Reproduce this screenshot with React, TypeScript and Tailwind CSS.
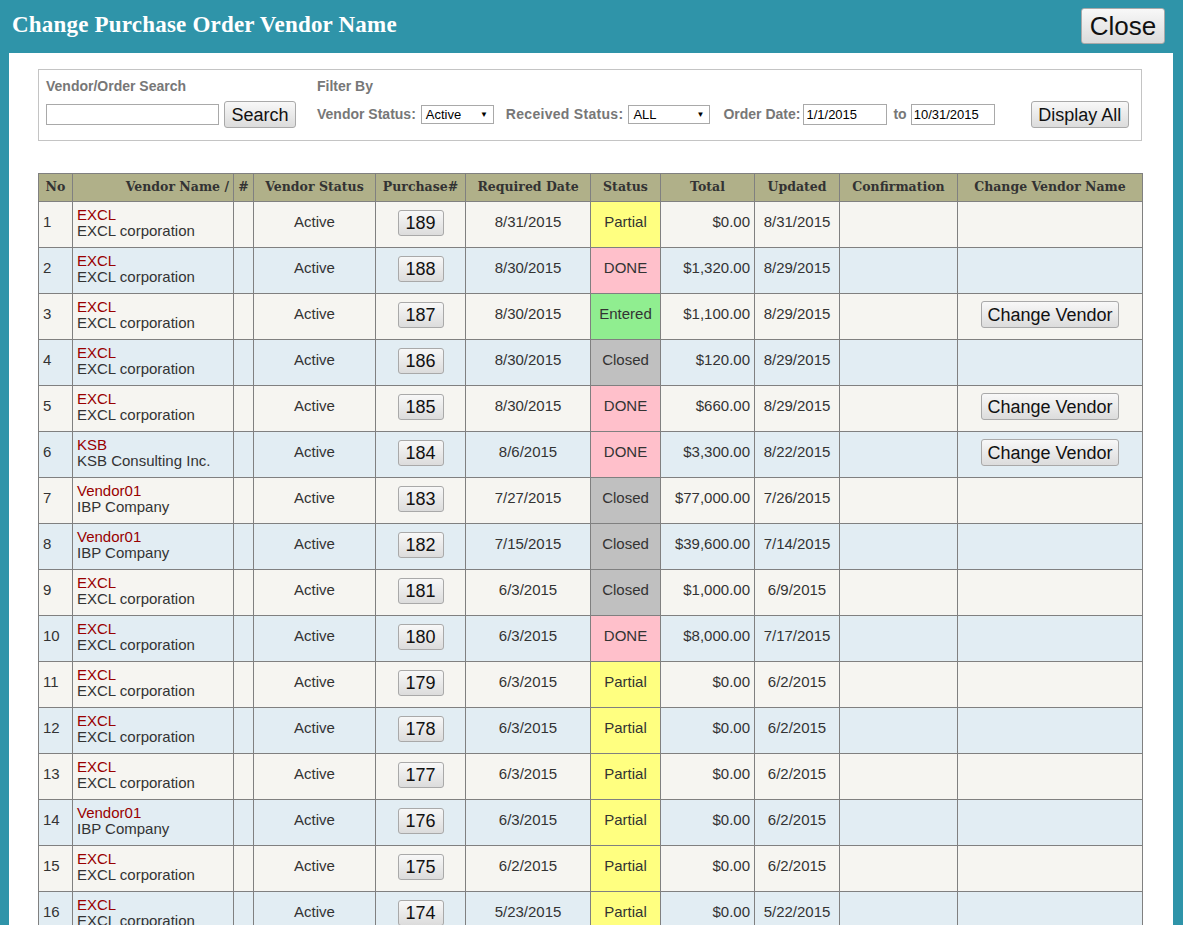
import React from "react";

type Status = "Partial" | "DONE" | "Entered" | "Closed";

type Row = {
  code: string;
  name: string;
  po: number;
  required: string;
  status: Status;
  total: string;
  updated: string;
  change?: boolean;
};

const EX = { code: "EXCL", name: "EXCL corporation" };
const IBP = { code: "Vendor01", name: "IBP Company" };
const KSB = { code: "KSB", name: "KSB Consulting Inc." };

const rows: Row[] = [
  { ...EX, po: 189, required: "8/31/2015", status: "Partial", total: "$0.00", updated: "8/31/2015" },
  { ...EX, po: 188, required: "8/30/2015", status: "DONE", total: "$1,320.00", updated: "8/29/2015" },
  { ...EX, po: 187, required: "8/30/2015", status: "Entered", total: "$1,100.00", updated: "8/29/2015", change: true },
  { ...EX, po: 186, required: "8/30/2015", status: "Closed", total: "$120.00", updated: "8/29/2015" },
  { ...EX, po: 185, required: "8/30/2015", status: "DONE", total: "$660.00", updated: "8/29/2015", change: true },
  { ...KSB, po: 184, required: "8/6/2015", status: "DONE", total: "$3,300.00", updated: "8/22/2015", change: true },
  { ...IBP, po: 183, required: "7/27/2015", status: "Closed", total: "$77,000.00", updated: "7/26/2015" },
  { ...IBP, po: 182, required: "7/15/2015", status: "Closed", total: "$39,600.00", updated: "7/14/2015" },
  { ...EX, po: 181, required: "6/3/2015", status: "Closed", total: "$1,000.00", updated: "6/9/2015" },
  { ...EX, po: 180, required: "6/3/2015", status: "DONE", total: "$8,000.00", updated: "7/17/2015" },
  { ...EX, po: 179, required: "6/3/2015", status: "Partial", total: "$0.00", updated: "6/2/2015" },
  { ...EX, po: 178, required: "6/3/2015", status: "Partial", total: "$0.00", updated: "6/2/2015" },
  { ...EX, po: 177, required: "6/3/2015", status: "Partial", total: "$0.00", updated: "6/2/2015" },
  { ...IBP, po: 176, required: "6/3/2015", status: "Partial", total: "$0.00", updated: "6/2/2015" },
  { ...EX, po: 175, required: "6/2/2015", status: "Partial", total: "$0.00", updated: "6/2/2015" },
  { ...EX, po: 174, required: "5/23/2015", status: "Partial", total: "$0.00", updated: "5/22/2015" },
  { ...EX, po: 173, required: "5/20/2015", status: "Closed", total: "$450.00", updated: "5/19/2015" },
];

const STATUS_BG: Record<Status, string> = {
  Partial: "bg-[#ffff80]",
  DONE: "bg-[#ffc0cb]",
  Entered: "bg-[#90ee90]",
  Closed: "bg-[#c0c0c0]",
};

const btn =
  "border border-[#a9a9a9] rounded-[3px] bg-linear-to-b from-[#f8f8f8] to-[#dcdcdc] text-[#111] leading-none";

function FakeSelect({ value, width }: { value: string; width: string }) {
  return (
    <div
      className={`${width} h-[19px] border border-[#a9a9a9] bg-white flex items-center justify-between pl-[4px] pr-[5px] text-[13px] text-black font-normal`}
    >
      <span>{value}</span>
      <span className="text-[8px]">▼</span>
    </div>
  );
}

function Filters() {
  return (
    <div className="border border-[#c4c4c4] h-[72px] pl-[7px] pt-[8px] flex font-['Liberation_Sans',Arial,sans-serif] text-[14px] font-bold text-[#777]">
      <div className="flex flex-col w-[271px]">
        <div className="h-[16px] leading-[16px]">Vendor/Order Search</div>
        <div className="flex items-center mt-[7px]">
          <div className="w-[173px] h-[21px] border border-[#a9a9a9] bg-white" />
          <button className={`${btn} ml-[5px] w-[72px] h-[27px] text-[18px] font-normal`}>Search</button>
        </div>
      </div>
      <div className="flex flex-col">
        <div className="h-[16px] leading-[16px]">Filter By</div>
        <div className="flex items-center mt-[7px] h-[27px]">
          <span>Vendor Status:</span>
          <div className="ml-[5px]">
            <FakeSelect value="Active" width="w-[73px]" />
          </div>
          <span className="ml-[12px] tracking-[0.3px]">Received Status:</span>
          <div className="ml-[5px]">
            <FakeSelect value="ALL" width="w-[82px]" />
          </div>
          <span className="ml-[13px]">Order Date:</span>
          <div className="ml-[3px] w-[84px] h-[21px] border border-[#a9a9a9] bg-white pl-[2px] text-[13px] font-normal text-black leading-[19px]">
            1/1/2015
          </div>
          <span className="ml-[6px]">to</span>
          <div className="ml-[4px] w-[84px] h-[21px] border border-[#a9a9a9] bg-white pl-[2px] text-[13px] font-normal text-black leading-[19px]">
            10/31/2015
          </div>
          <button className={`${btn} ml-[36px] w-[98px] h-[27px] text-[18px] font-normal`}>Display All</button>
        </div>
      </div>
    </div>
  );
}

const th =
  "border border-[#808080] font-['DejaVu_Serif','Liberation_Serif',serif] font-bold text-[12.5px] text-[#333] h-[28px] px-[4px] whitespace-nowrap";
const td = "border border-[#808080] px-[4px] pb-[4px] align-middle";

export default function App() {
  return (
    <div className="min-h-screen bg-[#2f94a9] font-['Liberation_Sans',Arial,sans-serif]">
      <div className="h-[53px] flex items-start justify-between pl-[12px] pr-[18px]">
        <h1 className="mt-[10px] text-white text-[23px] font-bold font-['Liberation_Serif','Times_New_Roman',serif] tracking-[0.2px] leading-[30px]">
          Change Purchase Order Vendor Name
        </h1>
        <button className={`${btn} mt-[8px] w-[84px] h-[36px] text-[26px]`}>Close</button>
      </div>
      <div className="ml-[9px] mr-[10px] bg-white pt-[16px] pl-[29px] pr-[31px] pb-[20px]">
        <Filters />
        <table className="mt-[32px] w-[1104px] border-collapse table-fixed text-[15px] text-[#333]">
          <colgroup>
            <col className="w-[34px]" />
            <col className="w-[161px]" />
            <col className="w-[20px]" />
            <col className="w-[122px]" />
            <col className="w-[90px]" />
            <col className="w-[125px]" />
            <col className="w-[70px]" />
            <col className="w-[94px]" />
            <col className="w-[85px]" />
            <col className="w-[118px]" />
            <col className="w-[185px]" />
          </colgroup>
          <thead>
            <tr className="bg-[#b0b089]">
              <th className={`${th} text-center`}>No</th>
              <th className={`${th} text-right`}>Vendor Name /</th>
              <th className={`${th} text-center`}>#</th>
              <th className={`${th} text-center`}>Vendor Status</th>
              <th className={`${th} text-center`}>Purchase#</th>
              <th className={`${th} text-center`}>Required Date</th>
              <th className={`${th} text-center`}>Status</th>
              <th className={`${th} text-center`}>Total</th>
              <th className={`${th} text-center`}>Updated</th>
              <th className={`${th} text-center`}>Confirmation</th>
              <th className={`${th} text-center`}>Change Vendor Name</th>
            </tr>
          </thead>
          <tbody>
            {rows.map((r, i) => (
              <tr key={r.po} className={`h-[46px] ${i % 2 === 0 ? "bg-[#f6f5f1]" : "bg-[#e2edf3]"}`}>
                <td className={`${td} text-left`}>{i + 1}</td>
                <td className={`${td} text-left leading-[16px]`}>
                  <div className="text-[#990000]">{r.code}</div>
                  <div>{r.name}</div>
                </td>
                <td className={td}></td>
                <td className={`${td} text-center`}>Active</td>
                <td className={`${td} text-center`}>
                  <button className={`${btn} w-[46px] h-[26px] text-[18px]`}>{r.po}</button>
                </td>
                <td className={`${td} text-center`}>{r.required}</td>
                <td className={`${td} text-center ${STATUS_BG[r.status]}`}>{r.status}</td>
                <td className={`${td} text-right`}>{r.total}</td>
                <td className={`${td} text-center`}>{r.updated}</td>
                <td className={td}></td>
                <td className={`${td} text-center`}>
                  {r.change && (
                    <button className={`${btn} w-[138px] h-[27px] text-[18px]`}>Change Vendor</button>
                  )}
                </td>
              </tr>
            ))}
          </tbody>
        </table>
      </div>
    </div>
  );
}
